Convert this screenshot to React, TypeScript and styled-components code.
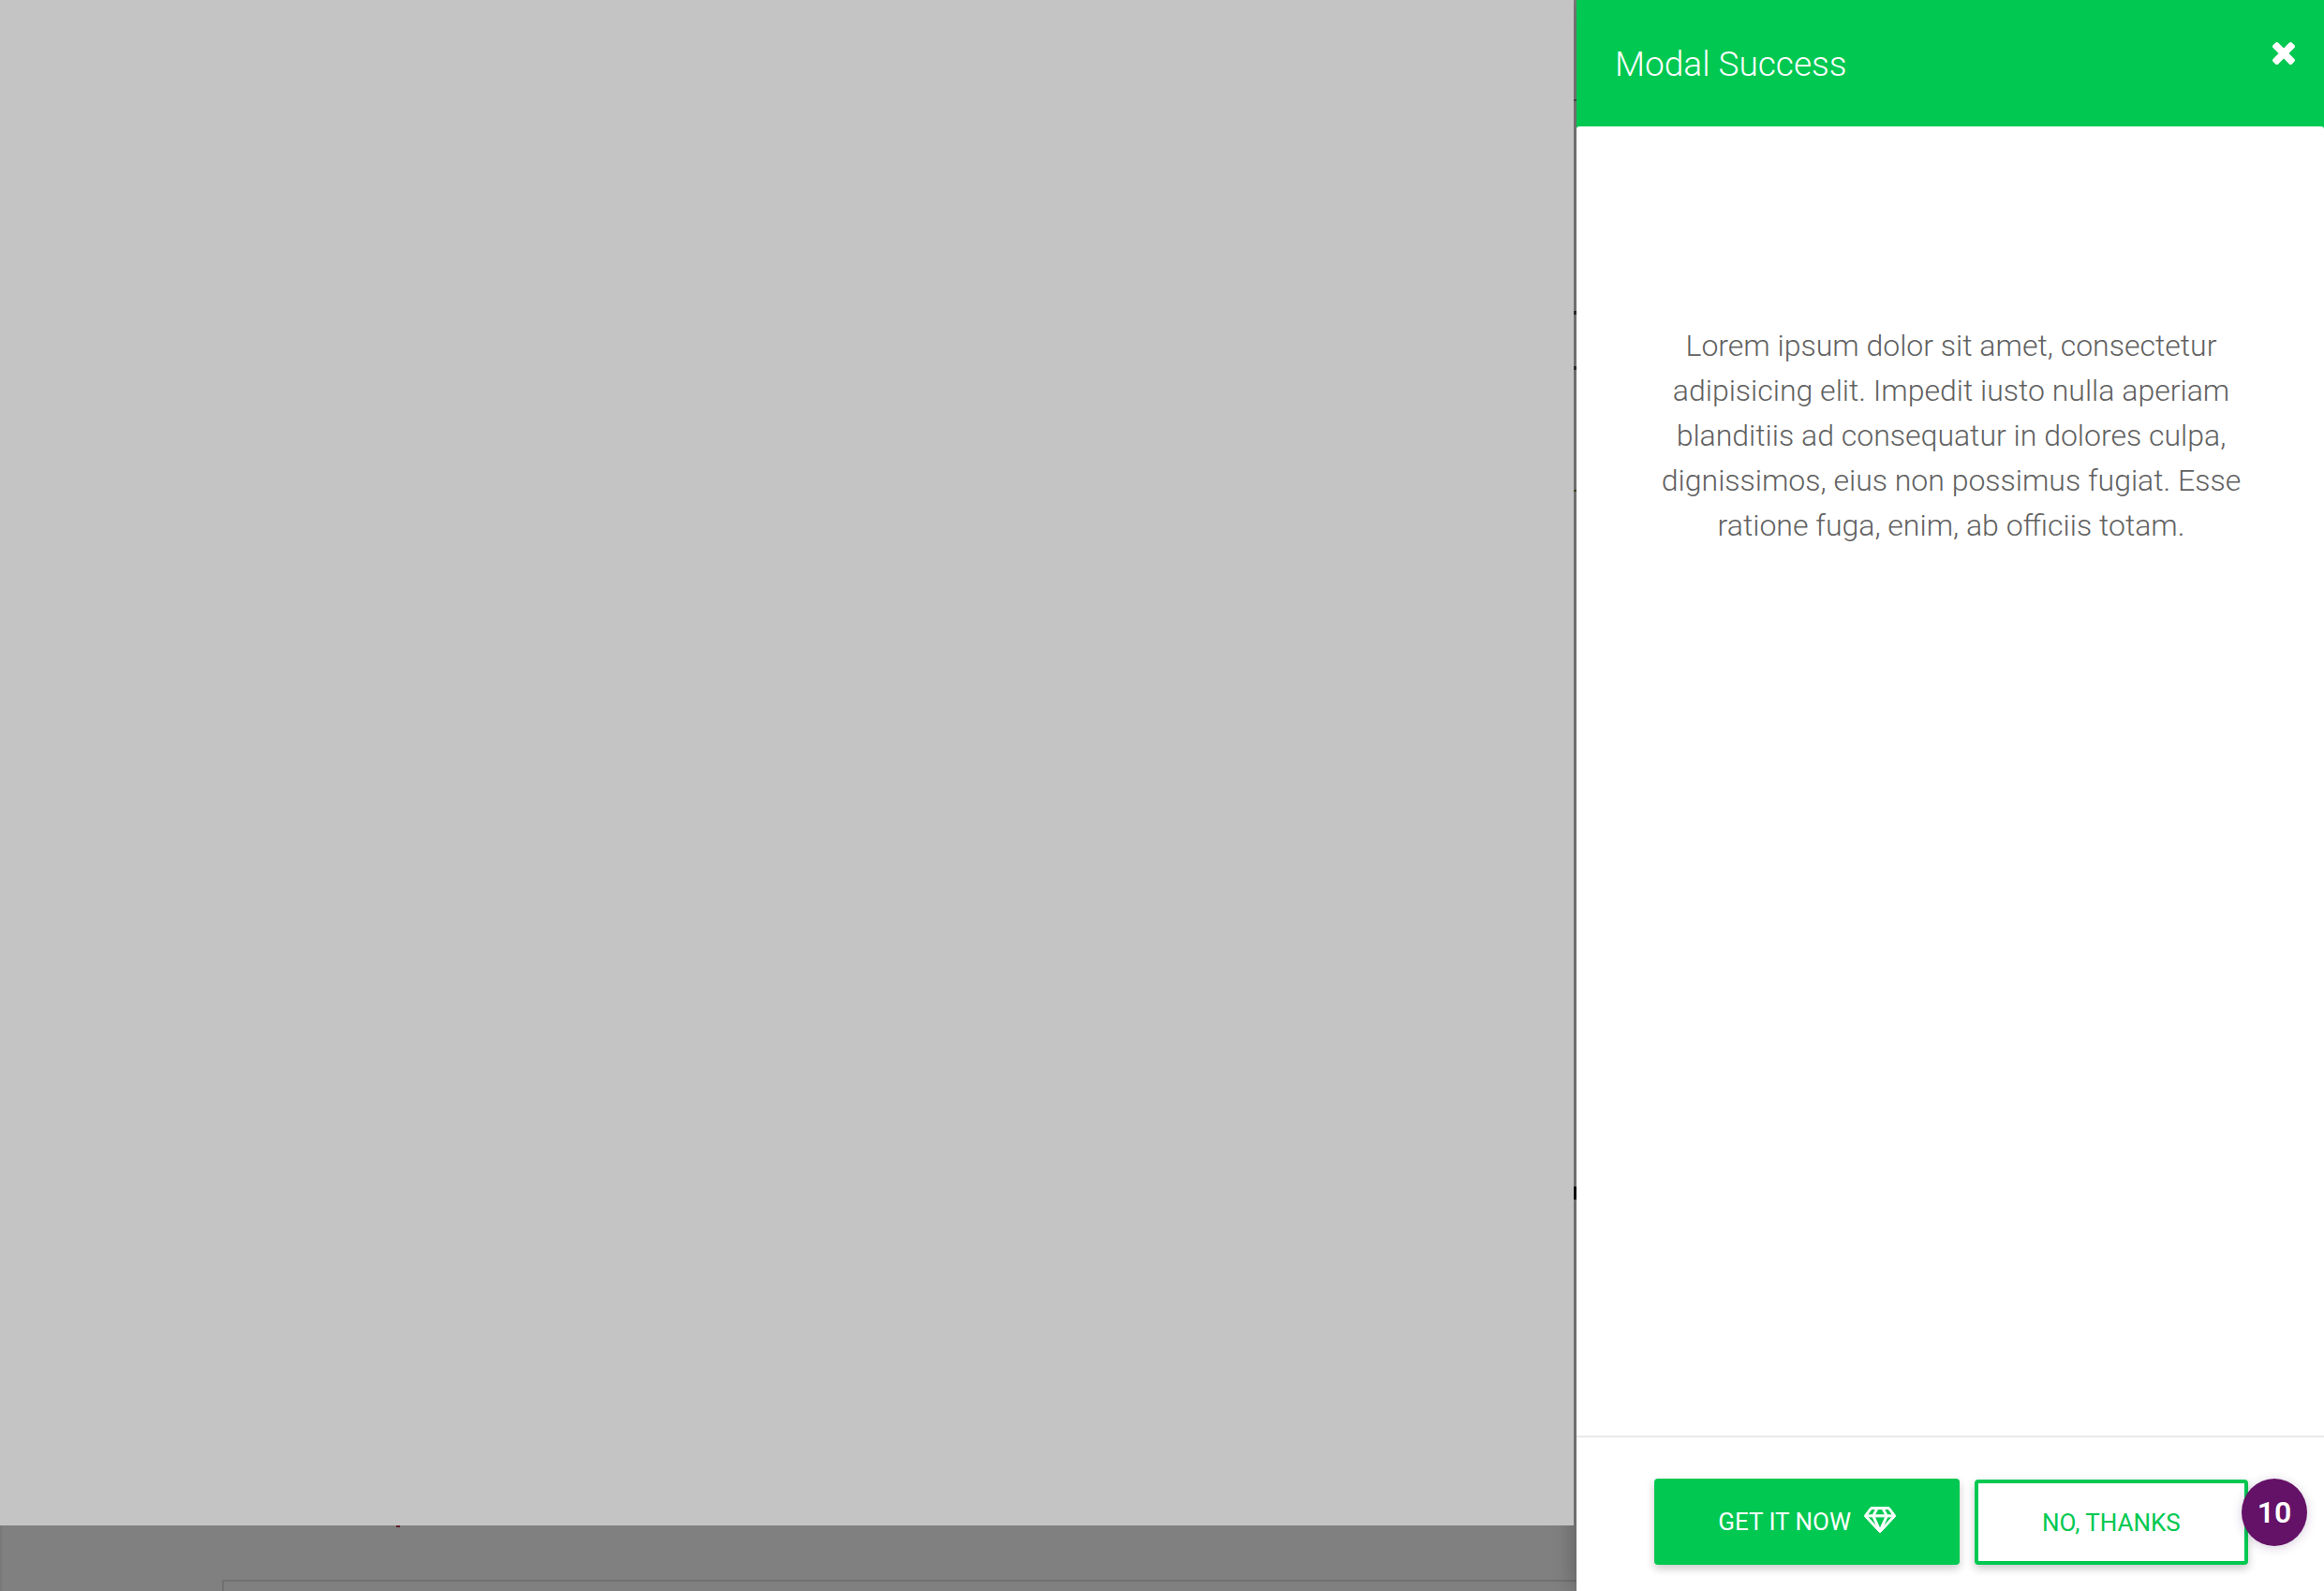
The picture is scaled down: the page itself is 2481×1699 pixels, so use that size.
import React from "react";
import styled, { createGlobalStyle } from "styled-components";

const green = "#00c851";

const GlobalStyle = createGlobalStyle`
  *, *::before, *::after { box-sizing: border-box; }
  body {
    margin: 0;
    background: #808080;
    font-family: Roboto, "Liberation Sans", sans-serif;
  }
`;

const Page = styled.div`
  display: grid;
  grid-template-columns: minmax(0, 1fr) 798px;
  min-height: 100vh;
`;

const Backdrop = styled.main`
  position: relative;
  display: flex;
  flex-direction: column;
  background: #808080;
`;

const Veil = styled.div`
  position: relative;
  z-index: 2;
  flex: 1;
  margin-right: 3px;
  background: #c4c4c4;
`;

const PageEdge = styled.div`
  height: 70px;
  padding: 58px 0 0 235px;
  border-left: 2px solid #797979;
  overflow: hidden;
`;

const CardEdge = styled.div`
  height: 40px;
  border: 2px solid #717171;
  border-right: 0;
`;

const Tick = styled.span<{ $top: number; $height: number; $color: string }>`
  position: absolute;
  z-index: 1;
  right: 0;
  top: ${(p) => p.$top}px;
  width: 3px;
  height: ${(p) => p.$height}px;
  background: ${(p) => p.$color};
`;

const RedMark = styled.span`
  position: absolute;
  left: 423px;
  bottom: 68px;
  width: 4px;
  height: 2px;
  background: #5c1c2a;
`;

const Panel = styled.section`
  position: relative;
  z-index: 1;
  display: flex;
  flex-direction: column;
  background: ${green};
  box-shadow: 0 0 24px rgba(0, 0, 0, 0.3);
`;

const Header = styled.header`
  display: flex;
  align-items: flex-start;
  justify-content: space-between;
  height: 135px;
  padding: 42px 31px 0 41px;
  color: #fff;
`;

const Title = styled.h1`
  margin: 0;
  font-size: 37px;
  line-height: 54px;
  font-weight: 300;
`;

const CloseButton = styled.button`
  display: flex;
  margin: 0;
  padding: 3px 0;
  border: 0;
  background: none;
  color: inherit;
  cursor: pointer;
`;

const Sheet = styled.div`
  display: flex;
  flex: 1;
  flex-direction: column;
  border-radius: 3px 3px 0 0;
  background: #fff;
`;

const Body = styled.div`
  flex: 1;
  padding: 210px 82px 0 84px;
`;

const Copy = styled.p`
  margin: 0;
  color: #616161;
  font-size: 32px;
  line-height: 48px;
  font-weight: 300;
  text-align: center;
`;

const Footer = styled.footer`
  display: flex;
  align-items: flex-end;
  justify-content: center;
  gap: 16px;
  padding: 44px 0 28px 2px;
  border-top: 2px solid #e9e9e9;
`;

const Action = styled.button<{ $outline?: boolean }>`
  display: flex;
  align-items: center;
  justify-content: center;
  gap: 14px;
  height: ${(p) => (p.$outline ? 91 : 92)}px;
  padding: 0 68px;
  border: ${(p) => (p.$outline ? `4px solid ${green}` : "0")};
  border-radius: 4px;
  background: ${(p) => (p.$outline ? "#fff" : green)};
  color: ${(p) => (p.$outline ? green : "#fff")};
  box-shadow: 0 4px 10px rgba(0, 0, 0, 0.22);
  font-family: inherit;
  font-size: 26px;
  line-height: 40px;
  font-weight: 400;
  text-transform: uppercase;
  white-space: nowrap;
  cursor: pointer;

  svg {
    margin-bottom: 4px;
  }
`;

const Badge = styled.button`
  position: absolute;
  right: 18px;
  bottom: 48px;
  width: 70px;
  height: 72px;
  padding: 0;
  border: 0;
  border-radius: 50%;
  background: #641267;
  color: #fff;
  box-shadow: 0 2px 12px rgba(60, 20, 90, 0.2);
  font-family: inherit;
  font-size: 32px;
  line-height: 70px;
  font-weight: 600;
`;

const ticks = [
  { top: 106, height: 2, color: "#4c4c4c" },
  { top: 332, height: 4, color: "#303030" },
  { top: 391, height: 4, color: "#303030" },
  { top: 523, height: 2, color: "#4a4a28" },
  { top: 1267, height: 14, color: "#101010" },
];

const CrossIcon = () => (
  <svg width="24" height="24" viewBox="110 366 1188 1188" fill="currentColor" aria-hidden="true">
    <path d="M1298 1322q0 40-28 68l-136 136q-28 28-68 28t-68-28l-294-294-294 294q-28 28-68 28t-68-28l-136-136q-28-28-28-68t28-68l294-294-294-294q-28-28-28-68t28-68l136-136q28-28 68-28t68 28l294 294 294-294q28-28 68-28t68 28l136 136q28 28 28 68t-28 68l-294 294 294 294q28 28 28 68z" />
  </svg>
);

const DiamondIcon = () => (
  <svg
    width="34"
    height="30"
    viewBox="-20 108 2088 1704"
    fill="currentColor"
    stroke="currentColor"
    strokeWidth="60"
    aria-hidden="true"
  >
    <path d="M212 768l623 665-300-665h-323zm812 772l349-772h-698zm-486-900l204-384h-262l-288 384h346zm675 793l623-665h-323zm-531-793h684l-204-384h-276zm828 0h346l-288-384h-262zm141-486l384 512q14 18 13 41.5t-17 40.5l-960 1024q-18 20-47 20t-47-20l-960-1024q-16-17-17-40.5t13-41.5l384-512q18-26 51-26h1152q33 0 51 26z" />
  </svg>
);

export default function App() {
  return (
    <>
      <GlobalStyle />
      <Page>
        <Backdrop>
          <Veil />
          <PageEdge>
            <CardEdge />
          </PageEdge>
          {ticks.map((t) => (
            <Tick key={t.top} $top={t.top} $height={t.height} $color={t.color} />
          ))}
          <RedMark />
        </Backdrop>
        <Panel role="dialog" aria-labelledby="modal-title">
          <Header>
            <Title id="modal-title">Modal Success</Title>
            <CloseButton type="button" aria-label="Close">
              <CrossIcon />
            </CloseButton>
          </Header>
          <Sheet>
            <Body>
              <Copy>
                Lorem ipsum dolor sit amet, consectetur adipisicing elit. Impedit iusto nulla
                aperiam blanditiis ad consequatur in dolores culpa, dignissimos, eius non possimus
                fugiat. Esse ratione fuga, enim, ab officiis totam.
              </Copy>
            </Body>
            <Footer>
              <Action type="button">
                Get it now
                <DiamondIcon />
              </Action>
              <Action type="button" $outline>
                No, thanks
              </Action>
            </Footer>
          </Sheet>
          <Badge type="button">10</Badge>
        </Panel>
      </Page>
    </>
  );
}
